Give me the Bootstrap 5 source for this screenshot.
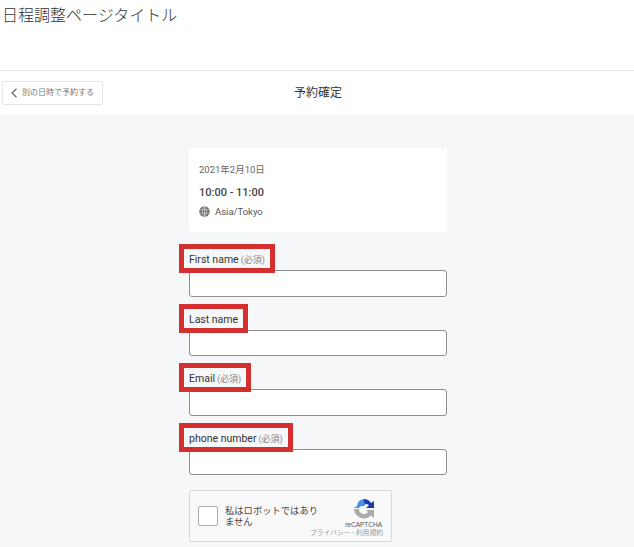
<!DOCTYPE html>
<html lang="ja">

<head>
  <meta charset="UTF-8">
  <title>日程調整ページタイトル</title>
  <link href="https://cdn.jsdelivr.net/npm/bootstrap@5.3.3/dist/css/bootstrap.min.css" rel="stylesheet">
  <style>
    html, body {
      height: 547px;
      overflow: hidden;
    }

    body {
      font-family: Roboto, "Noto Sans CJK JP", sans-serif;
      color: #3c4043;
      background: #f6f7f9;
    }

    .top-head {
      height: 71px;
      padding: 4px 2px 0;
      background: #fff;
      border-bottom: 1px solid #e4e5e7;
    }

    .top-title {
      margin: 0;
      font-size: 16px;
      font-weight: 300;
      line-height: 24px;
      color: #333;
    }

    .sub-head {
      height: 44px;
      background: #fff;
    }

    .back-btn {
      left: 2px;
      top: 10px;
      width: 101px;
      height: 24px;
      font-size: 8px;
      color: #777;
      background: #fff;
      border: 1px solid #e6e6e6;
      border-radius: 2px;
      padding: 0 0 0 7px;
      gap: 4px;
      white-space: nowrap;
    }

    .sub-title {
      font-size: 12px;
      color: #333;
      line-height: 44px;
      padding-left: 2px;
    }

    .form-col {
      width: 258px;
      margin-left: 189px;
      padding-top: 33px;
    }

    .date-box {
      height: 84px;
      background: #fff;
      border-radius: 2px;
      padding: 15px 10px 0;
      margin-bottom: 12px;
    }

    .date-line {
      font-size: 9.5px;
      line-height: 13px;
      color: #666;
    }

    .time-line {
      font-size: 11px;
      font-weight: 500;
      line-height: 16px;
      color: #444;
      margin-top: 9px;
    }

    .zone-line {
      font-size: 9.5px;
      line-height: 13px;
      color: #555;
      margin-top: 4px;
      gap: 5px;
    }

    .red-box {
      position: relative;
      z-index: 2;
      display: block;
      width: fit-content;
      height: 29px;
      margin: 0 0 -3px -10px;
      padding: 0 5px;
      border: 5px solid #d32f2f;
      font-size: 10.5px;
      line-height: 21px;
      color: #333;
      white-space: nowrap;
    }

    .need {
      font-size: 9px;
      color: #888;
      margin-left: 2px;
    }

    .field-input {
      display: block;
      width: 100%;
      height: 26.5px;
      background: #fff;
      border: 1px solid #8f8f8f;
      border-radius: 3px;
      padding: 0 8px;
    }

    .field-gap {
      margin-bottom: 7px;
    }

    .captcha-box {
      width: 203px;
      height: 52px;
      margin-top: 15px;
      background: #f9f9f9;
      border: 1px solid #d6d6d6;
      border-radius: 2px;
      padding: 0 0 0 8px;
    }

    .captcha-check {
      width: 20px;
      height: 20px;
      flex: none;
      background: #fff;
      border: 1px solid #aaa;
      border-radius: 2px;
    }

    .captcha-text {
      width: 98px;
      margin-left: 7px;
      font-size: 9.3px;
      line-height: 11px;
      color: #444;
    }

    .captcha-logo {
      right: 16px;
      top: 7px;
      width: 22px;
      height: 22px;
    }

    .captcha-name {
      right: 9px;
      top: 30px;
      font-size: 6.5px;
      line-height: 8px;
      color: #555;
      font-family: "Liberation Sans", sans-serif;
    }

    .captcha-links {
      right: 8px;
      top: 38px;
      font-size: 6.8px;
      line-height: 9px;
      color: #999;
      white-space: nowrap;
    }
  </style>
</head>

<body>

  <!-- Page title -->
  <header class="top-head">
    <h1 class="top-title">日程調整ページタイトル</h1>
  </header>

  <!-- Back button + step title -->
  <div class="sub-head position-relative text-center">
    <a class="back-btn position-absolute d-flex align-items-center text-decoration-none" href="#">
      <svg width="8" height="10" viewBox="0 0 8 10">
        <path d="M6.5 .8 2 5l4.500 4.200" fill="none" stroke="#666" stroke-width="1.200" />
      </svg>
      <span>別の日時で予約する</span>
    </a>
    <div class="sub-title">予約確定</div>
  </div>

  <main class="form-col">
    <div class="date-box">
      <div class="date-line">2021年2月10日</div>
      <div class="time-line">10:00 - 11:00</div>
      <div class="zone-line d-flex align-items-center">
        <svg width="11" height="11" viewBox="0 0 12 12" class="flex-shrink-0">
          <circle cx="6" cy="6" r="5.700" fill="#6f6f6f" />
          <path d="M.7 4.200h10.600M.7 7.800h10.600M6 .7v10.600M6 .7C3 3.500 3 8.500 6 11.300M6 .7c3 2.800 3 7.800 0 10.600" fill="none" stroke="#fff" stroke-width=".5" />
        </svg>
        <span>Asia/Tokyo</span>
      </div>
    </div>

    <label class="red-box">First name<span class="need">(必須)</span></label>
    <input class="field-input field-gap" type="text">

    <label class="red-box">Last name</label>
    <input class="field-input field-gap" type="text">

    <label class="red-box">Email<span class="need">(必須)</span></label>
    <input class="field-input field-gap" type="text">

    <label class="red-box">phone number<span class="need">(必須)</span></label>
    <input class="field-input" type="text">

    <!-- reCAPTCHA widget -->
    <div class="captcha-box position-relative d-flex align-items-center">
      <div class="captcha-check"></div>
      <div class="captcha-text">私はロボットではありません</div>
      <svg class="captcha-logo position-absolute" viewBox="0 0 22 22">
        <path d="M4 8A8 8 0 0 1 11 1l3 4-3 3H8L6 10H1Z" fill="#4a90e2" />
        <path d="M11 1a9 9 0 0 1 7 4l3-2v7h-8l3-3-5-2Z" fill="#1c3aa9" />
        <path d="M1 11h5a5 5 0 0 0 9 3l-2-2h8v8l-3-2.500A10 10 0 0 1 1 11Z" fill="#ababab" />
      </svg>
      <div class="captcha-name position-absolute">reCAPTCHA</div>
      <div class="captcha-links position-absolute">プライバシー - 利用規約</div>
    </div>
  </main>

</body>

</html>
